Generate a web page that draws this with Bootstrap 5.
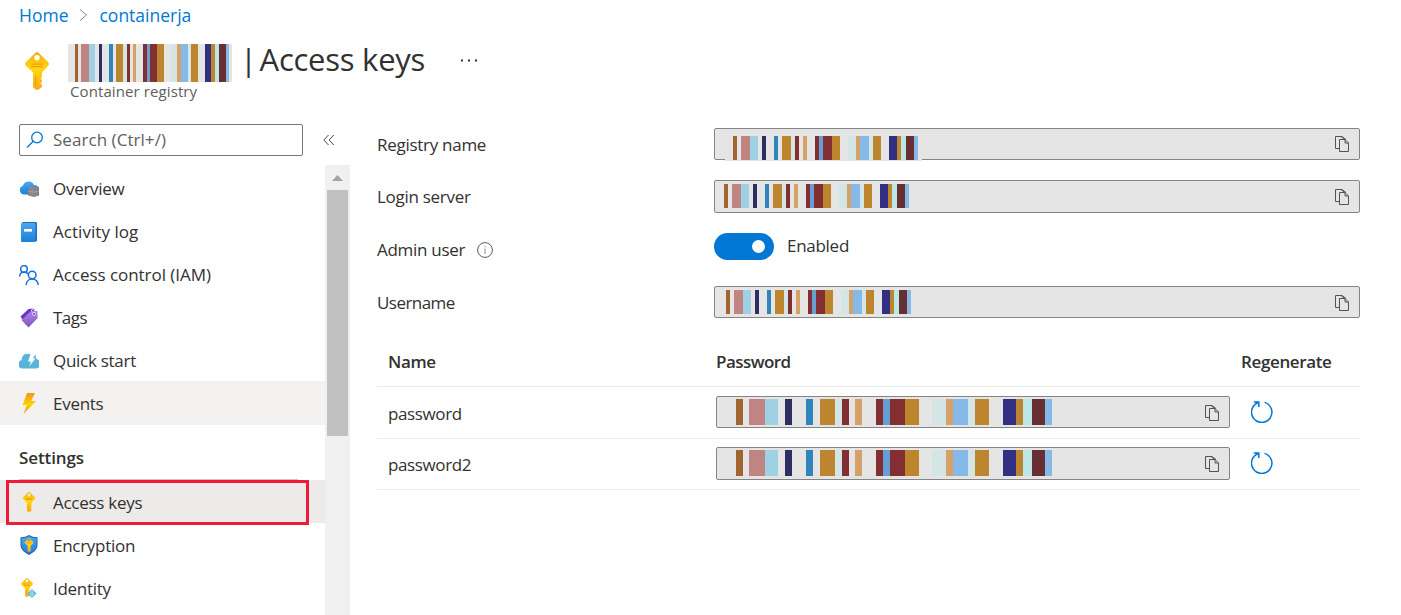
<!DOCTYPE html>
<html lang="en">
<head>
<meta charset="utf-8">
<meta name="viewport" content="width=device-width, initial-scale=1">
<title>Access keys</title>
<link href="https://cdn.jsdelivr.net/npm/bootstrap@5.3.0/dist/css/bootstrap.min.css" rel="stylesheet">
<style>
body{font-family:"Open Sans","Noto Sans",sans-serif;font-size:17px;line-height:24px;letter-spacing:-.28px;color:#323130;height:615px;overflow:hidden;background:#fff}
svg{display:block;flex:none}
.ls-soft{letter-spacing:.05px}
.ls-none{letter-spacing:-.04px}
.ls-tight{letter-spacing:-.55px}
.crumbs{height:31px;padding:0 0 1px 19px;gap:11px;color:#0078d4;font-size:17.5px;letter-spacing:0}
.crumbs a{color:#0078d4}
.page-head{height:93px;padding:13px 0 0 25px;gap:19px}
.mask{background:#e5e5e5;width:164px;height:38px;padding-left:7px}
.head-title{font-size:31px;line-height:31px;height:38px;margin-left:8px;white-space:pre;word-spacing:-5px}
.head-title .name-part{word-spacing:0;letter-spacing:-.25px}
.head-sub{font-size:15px;line-height:18px;color:#605e5c;margin-left:2px;letter-spacing:.1px}
.more{margin-left:36px;margin-top:15px}
.side{width:350px;height:491px}
.search-box{width:284px;height:32px;border:1px solid #7a7978;border-radius:2px;margin-left:19px;padding-left:6px;color:#605e5c;gap:9px}
.side-list{width:325px;padding-top:2px}
.side-item{height:43px;padding-left:19px;gap:14px}
.side-item.hov{background:#f3f2f1;box-shadow:0 -1px #f3f2f1}
.side-item.cur{background:#edebe9}
.low span{padding-top:2px}
.marker{left:6px;top:480px;width:303px;height:45px;border:3px solid #f01b38}
.sect{height:55px;padding:0 27px 0 19px}
.sect div{height:55px;border-bottom:1px solid #c8c6c4;line-height:65px;letter-spacing:-.1px}
.scroller{width:25px;height:460px;background:#f0f0f0}
.thumb{width:21px;height:246px;background:#c1c1c1}
.pane{padding:4px 41px 0 27px}
.field-label{width:337px;padding-top:5px}
.field-row{height:33px}
.key-box{background:#e5e5e5;border:1px solid #868583;border-radius:2px;height:32px;padding-right:10px}
.tall{height:33px}
.switch{width:60px;height:27px;border-radius:14px;background:#0078d4;padding-right:9px}
.knob{width:13px;height:13px}
.t-row{border-bottom:1px solid #edebe9;padding-left:11px;letter-spacing:-.37px}
.col-name{width:328px}
.t-row .cell{padding-top:6px}
.pw{width:514px}
.patch{background:#e5e5e5;left:10px;top:7px;height:25px;width:197px;padding-left:8px}
.semi{font-weight:600}
</style>
</head>
<body>
<svg width="0" height="0" class="position-absolute">
<defs>
<linearGradient id="gold" x1="0" y1="0" x2="0" y2="1"><stop offset="0" stop-color="#f9ad14"/><stop offset=".45" stop-color="#ffd70f"/><stop offset="1" stop-color="#fba71b"/></linearGradient>
<linearGradient id="bluev" x1="0" y1="0" x2="0" y2="1"><stop offset="0" stop-color="#4ba8f0"/><stop offset="1" stop-color="#1b80dc"/></linearGradient>
<linearGradient id="bolt" x1="0" y1="0" x2="0" y2="1"><stop offset="0" stop-color="#f8921e"/><stop offset=".55" stop-color="#ffd400"/><stop offset="1" stop-color="#f7931e"/></linearGradient>
<linearGradient id="purple" x1="0" y1="0" x2="0" y2="1"><stop offset="0" stop-color="#b086e8"/><stop offset="1" stop-color="#7f55bd"/></linearGradient>
<symbol id="stripes" viewBox="0 0 948 10" preserveAspectRatio="none">
<g shape-rendering="crispEdges">
<path fill="#a1652f" d="M0 0h21v10H0z"/><path fill="#c08482" d="M39 0h48v10H39z"/><path fill="#9fd1e4" d="M87 0h39v10H87z"/>
<path fill="#2f2e63" d="M147 0h21v10h-21z"/><path fill="#3085bd" d="M210 0h21v10h-21z"/>
<path fill="#be852f" d="M252 0h45v10h-45zM507 0h42v10h-42zM717 0h42v10h-42zM840 0h21v10h-21z"/>
<path fill="#d3e6e5" d="M297 0h21v10h-21zM588 0h42v10h-42zM696 0h21v10h-21z"/>
<path fill="#832f31" d="M318 0h21v10h-21zM420 0h21v10h-21zM462 0h45v10h-45z"/>
<path fill="#d6a166" d="M357 0h21v10h-21zM630 0h21v10h-21z"/><path fill="#659fd5" d="M441 0h21v10h-21z"/>
<path fill="#84b9e8" d="M651 0h45v10h-45zM927 0h21v10h-21z"/><path fill="#332f82" d="M801 0h39v10h-39z"/>
<path fill="#bde7e6" d="M861 0h27v10h-27z"/><path fill="#672f31" d="M888 0h39v10h-39z"/>
</g></symbol>
<symbol id="key" viewBox="0 0 24 38"><path fill="url(#gold)" fill-rule="evenodd" d="M10.400 .8Q12 -.6 13.600 .8L23 10Q24.800 12 23 14L17 20.500V25l-1.500 1.500L17 28v2l-1.500 1.500L17 33v2l-3.600 2.600q-1.400 .8-2.800 0L8 35V20.500L1 14Q-.8 12 1 10zM12 3a2.700 2.700 0 1 0 0 5.400A2.700 2.700 0 1 0 12 3z"/><path fill="#f59b12" d="M6 11.500h12v1.300H6zM6 14h12v1.300H6zM10 24h1.200v10L10 33z"/></symbol>
<symbol id="copy" viewBox="0 0 14 16"><path fill="none" stroke="#55534f" d="M4.500 12.500h-4V.5h5.500l3 2.500M4.500 3.500H10L13.500 7v8.500h-9zM10 3.500V7h3.500M6 .5h1l4 3"/></symbol>
<symbol id="regen" viewBox="0 0 22 22"><path fill="none" stroke="#0078d4" stroke-width="1.500" d="M13.500 1.400A10.200 10.200 0 1 1 7.600 1.500M2.800 1.100h5v5"/></symbol>
</defs></svg>

<nav class="crumbs d-flex align-items-center"><a class="text-decoration-none" href="#">Home</a>
<svg width="9" height="12" viewBox="0 0 9 12"><path d="M1 .5l6.500 5.500L1 11.500" fill="none" stroke="#8a8886"/></svg>
<a class="text-decoration-none" href="#">containerja</a></nav>

<header class="page-head d-flex">
<svg class="mt-2" width="24" height="38"><use href="#key"/></svg>
<div>
<div class="d-flex"><div class="mask"><svg width="154" height="38"><use href="#stripes"/></svg></div>
<div class="head-title">| <span class="name-part">Access keys</span></div>
<svg class="more" width="16" height="3"><path fill="#323130" d="M0 .5h2v2H0zM7 .5h2v2H7zM14 .5h2v2h-2z"/></svg></div>
<div class="head-sub">Container registry</div>
</div>
</header>

<div class="d-flex">
<aside class="side">
<div class="d-flex align-items-center">
<div class="search-box ls-soft d-flex align-items-center"><svg width="18" height="18" viewBox="0 0 18 18"><g fill="none" stroke="#0078d4" stroke-width="1.300"><circle cx="11" cy="6.500" r="5.300"/><path d="M7.200 10.300L1 16.500"/></g></svg><span>Search (Ctrl+/)</span></div>
<svg style="margin-left:20px" width="12" height="12" viewBox="0 0 12 12"><path d="M5.500 1L.8 6l4.700 5M10.800 1L6.100 6l4.700 5" fill="none" stroke="#484644"/></svg>
</div>
<div class="d-flex" style="padding-top:9px">
<div class="side-list">
<div class="side-item d-flex align-items-center"><svg width="20" height="20" viewBox="0 0 20 20"><path fill="url(#bluev)" d="M4.500 15.500A4.500 4.500 0 0 1 4 6.800 5.800 5.800 0 0 1 15 6a4.500 4.500 0 0 1 1 9.500z"/><path fill="#7b7b7b" d="M9 8.500l6-1.200 5 1.200v8l-5 1.500-6-1.500z"/><path stroke="#bbb" stroke-width=".5" fill="none" d="M15 7.500V18M9 12.500l6 .5 5-.5M11 8v9M13 8v9M17.500 8v9"/></svg><span>Overview</span></div>
<div class="side-item d-flex align-items-center"><svg width="20" height="20" viewBox="0 0 20 20"><rect x="3" y="0" width="15" height="19.500" rx="1.300" fill="#1d70b8"/><rect x="2" y="1" width="14.500" height="19" rx="1" fill="url(#bluev)"/><path fill="#fff" d="M5 7h8v2.600H5z"/></svg><span class="ls-soft">Activity log</span></div>
<div class="side-item d-flex align-items-center"><svg width="20" height="20" viewBox="0 0 20 20"><g fill="none" stroke="#0f6fe0" stroke-width="1.500"><circle cx="5" cy="3.900" r="3.300"/><circle cx="13.200" cy="10" r="3.800"/><path d="M.7 11.500C.7 6.500 7 5.700 9 9M7.200 20c0-8 12-8 12 0"/></g></svg><span class="ls-none">Access control (IAM)</span></div>
<div class="side-item d-flex align-items-center"><svg width="20" height="20" viewBox="0 0 20 20"><path fill="#6a35c9" d="M1.500 8.500L9.500 1 14 .5l2 1v6L7 17z"/><path fill="url(#purple)" d="M2.500 12l9-8.500 6-.8 1 1v6.500L9.500 19.500z"/><circle cx="15" cy="6" r="1.500" fill="#5b2bb0" stroke="#fff" stroke-width=".8"/><path fill="none" stroke="#fff" stroke-width=".9" d="M15.500 3a1.500 1.500 0 1 0-2 1"/></svg><span class="ls-tight">Tags</span></div>
<div class="side-item d-flex align-items-center"><svg width="20" height="20" viewBox="0 0 20 20"><path fill="#59b4d9" d="M4.500 17.500A4.300 4.300 0 0 1 2.700 9 6 5.800 0 0 1 5.500 3.300Q8.500 2 11.500 3.300L9 10.500h3l-2 5 6.500-8H14l2.300-4.300 1 4.800a4.700 4.700 0 0 1-1 9.500z"/></svg><span>Quick start</span></div>
<div class="side-item hov d-flex align-items-center"><svg width="20" height="21" viewBox="0 0 20 21"><path fill="url(#bolt)" d="M8 0h8l-3.800 8H17L4.500 21l3.200-9H3.500z"/></svg><span>Events</span></div>
<div class="sect"><div class="semi">Settings</div></div>
<div class="low">
<div class="side-item cur d-flex align-items-center"><svg width="20" height="20"><use href="#key"/></svg><span>Access keys</span></div>
<div class="side-item d-flex align-items-center"><svg width="20" height="20" viewBox="0 0 20 20"><path fill="#1b62b8" d="M10 0q4 2.500 8.500 2.300V10c0 5-5 8-8.500 10C6.500 18 1.500 15 1.500 10V2.300Q6 2.500 10 0z"/><path fill="url(#bluev)" d="M10 1.200q3.500 2 7.500 2V10c0 4.500-4.500 7-7.500 8.800C7 17 2.500 14.500 2.500 10V3.200q4 0 7.500-2z"/><svg x="5" y="3" width="10" height="14"><use href="#key"/></svg></svg><span>Encryption</span></div>
<div class="side-item d-flex align-items-center"><svg width="20" height="20" viewBox="0 0 20 20"><svg x="2" y="0" width="12" height="19"><use href="#key"/></svg><path fill="#59b4d9" d="M13 11l4.500 4.500L13 20l-4.500-4.500z"/><path stroke="#fff" stroke-width=".5" fill="none" d="M13 12v7M10.500 15.500l2.500 2 2.500-2M13 13.500l-1.500 2M13 13.500l1.500 2"/></svg><span>Identity</span></div>
</div>
</div>
<div class="scroller d-flex flex-column align-items-center"><svg width="25" height="25"><path fill="#a3a3a3" d="M12.500 10l5.500 6H7z"/></svg><div class="thumb"></div></div>
</div>
</aside>

<main class="pane flex-grow-1">
<div class="d-flex field-row"><div class="field-label">Registry name</div>
<div class="key-box flex-grow-1 position-relative d-flex align-items-center justify-content-end"><div class="patch position-absolute"><svg width="185" height="24"><use href="#stripes"/></svg></div><svg width="14" height="16"><use href="#copy"/></svg></div></div>
<div class="d-flex field-row" style="margin-top:19px"><div class="field-label">Login server</div>
<div class="key-box tall flex-grow-1 d-flex align-items-center"><svg style="margin:-2px auto 0 9px" width="185" height="24"><use href="#stripes"/></svg><svg width="14" height="16"><use href="#copy"/></svg></div></div>
<div class="d-flex" style="margin-top:20px;height:33px"><div class="field-label d-flex"><span>Admin user</span><svg style="margin:4px 0 0 12px" width="16" height="16" viewBox="0 0 16 16"><circle cx="8" cy="8" r="7.400" fill="none" stroke="#605e5c"/><path fill="#8a8886" d="M7.500 4h1v1.300h-1zM7.500 6.500h1V12h-1z"/></svg></div>
<div class="switch d-flex align-items-center justify-content-end"><span class="knob bg-white rounded-circle"></span></div><span style="margin:1px 0 0 13px">Enabled</span></div>
<div class="d-flex field-row" style="margin-top:20px"><div class="field-label ls-tight">Username</div>
<div class="key-box flex-grow-1 d-flex align-items-center"><svg style="margin:0 auto 0 11px" width="185" height="24"><use href="#stripes"/></svg><svg style="margin-top:2px" width="14" height="16"><use href="#copy"/></svg></div></div>

<div class="t-row semi d-flex" style="height:68px;padding-top:31px"><div class="col-name">Name</div><div class="ls-tight" style="width:525px">Password</div><span>Regenerate</span></div>
<div class="t-row d-flex" style="height:52px;padding-top:9px"><div class="col-name cell">password</div><div class="key-box pw d-flex align-items-center"><svg style="margin:0 auto 0 19px" width="316" height="26"><use href="#stripes"/></svg><svg style="margin-top:2px" width="14" height="16"><use href="#copy"/></svg></div><svg style="margin:5px 0 0 21px" width="22" height="22"><use href="#regen"/></svg></div>
<div class="t-row d-flex" style="height:51px;padding-top:8px"><div class="col-name cell">password2</div><div class="key-box tall pw d-flex align-items-center"><svg style="margin:-1px auto 0 19px" width="316" height="26"><use href="#stripes"/></svg><svg width="14" height="16"><use href="#copy"/></svg></div><svg style="margin:5px 0 0 21px" width="22" height="22"><use href="#regen"/></svg></div>
</main>
</div>
<div class="marker position-absolute"></div>
<script src="https://cdn.jsdelivr.net/npm/bootstrap@5.3.0/dist/js/bootstrap.bundle.min.js"></script>
</body>
</html>
